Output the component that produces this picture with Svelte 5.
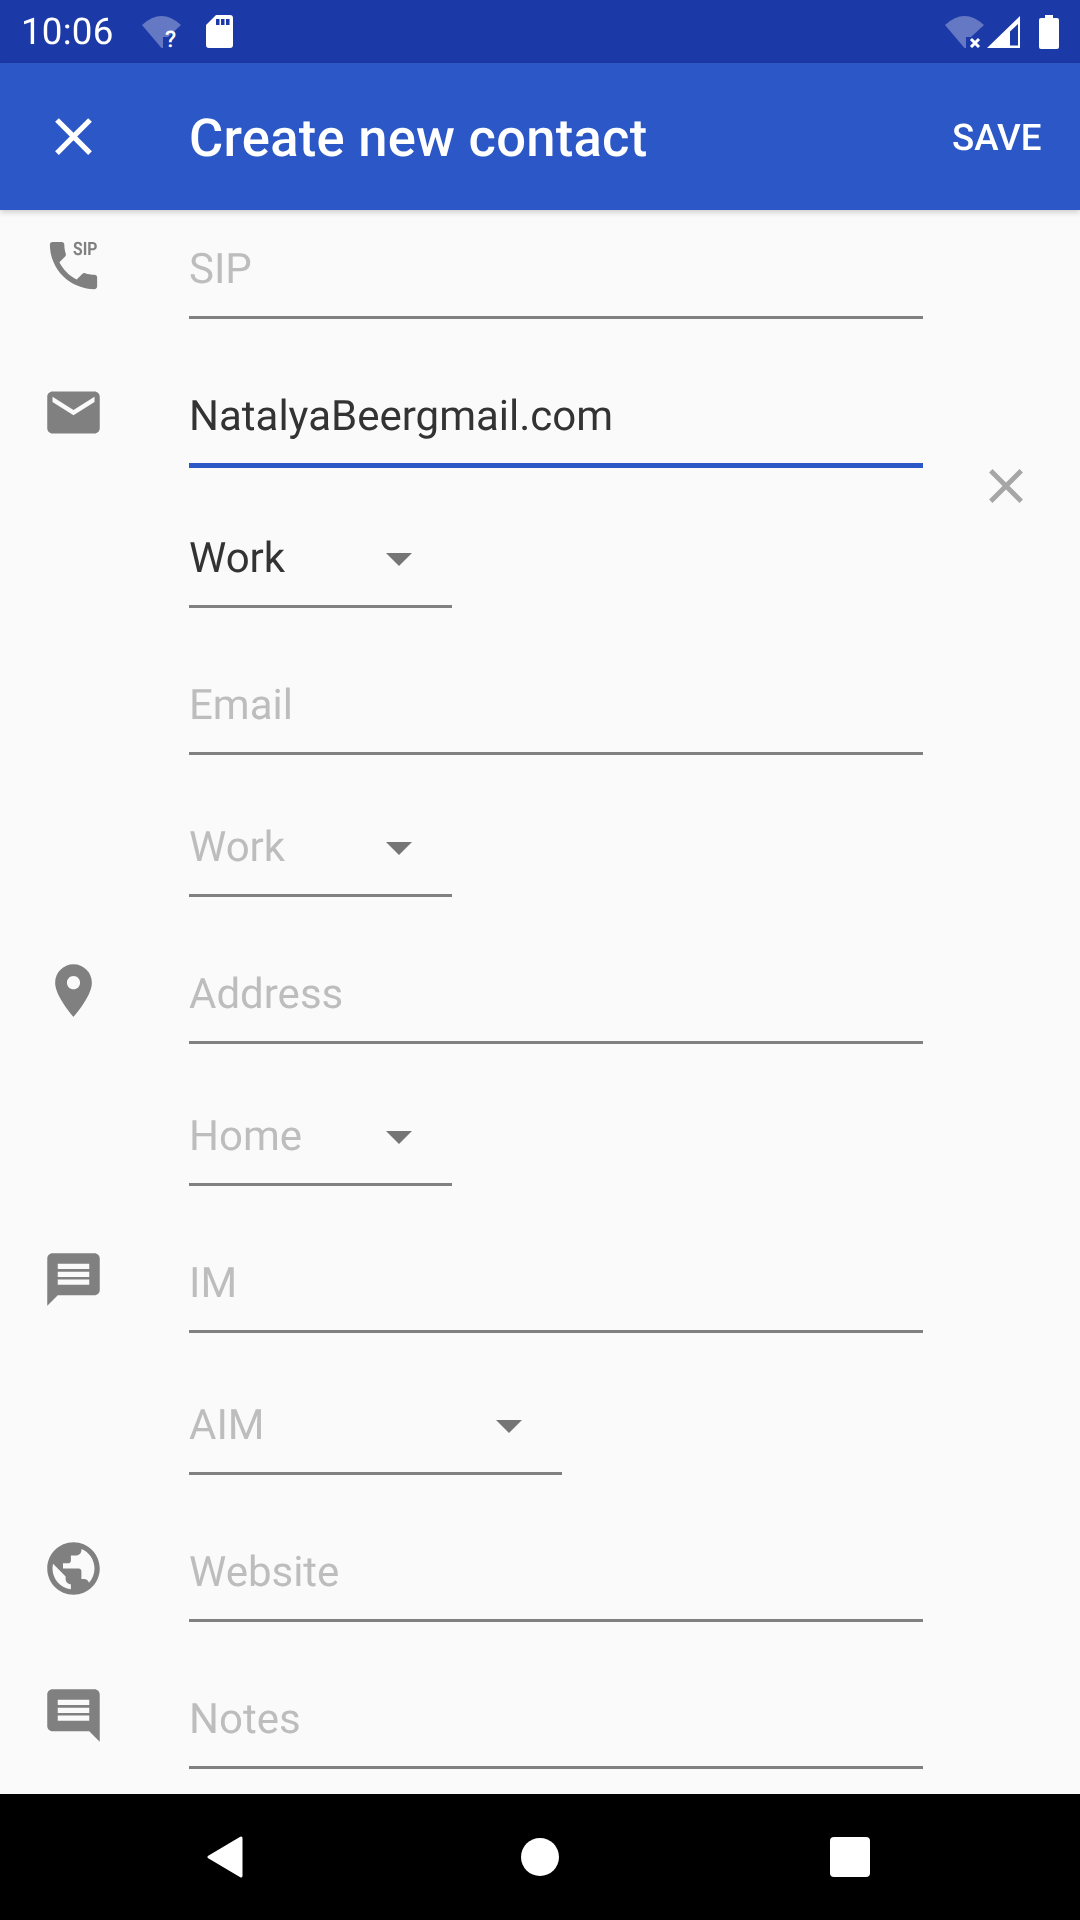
<script>
  const closePath = 'M19 6.41 17.59 5 12 10.59 6.41 5 5 6.41 10.59 12 5 17.59 6.41 19 12 13.41 17.59 19 19 17.59 13.41 12z';

  const groups = [
    { icon: 'M20 15.5c-1.25 0-2.45-.2-3.57-.57-.35-.11-.74-.03-1.01.24l-2.2 2.2c-2.83-1.44-5.15-3.75-6.59-6.59l2.2-2.21c.27-.26.35-.65.24-1C8.7 6.45 8.5 5.25 8.5 4c0-.55-.45-1-1-1H4c-.55 0-1 .45-1 1 0 9.39 7.61 17 17 17 .55 0 1-.45 1-1v-3.5c0-.55-.45-1-1-1z', sip: true, field: 'SIP' },
    { icon: 'M20 4H4c-1.1 0-2 .9-2 2v12c0 1.1.9 2 2 2h16c1.1 0 2-.9 2-2V6c0-1.1-.9-2-2-2zm0 4l-8 5-8-5V6l8 5 8-5v2z', field: 'Email', value: 'NatalyaBeergmail.com', focused: true, type: 'Work', typeValue: true, removable: true },
    { field: 'Email', type: 'Work' },
    { icon: 'M12 2C8.13 2 5 5.13 5 9c0 5.25 7 13 7 13s7-7.75 7-13c0-3.87-3.13-7-7-7zm0 9.5c-1.38 0-2.5-1.12-2.5-2.5s1.12-2.5 2.5-2.5 2.5 1.12 2.5 2.5-1.12 2.5-2.5 2.5z', field: 'Address', type: 'Home' },
    { icon: 'M20 2H4c-1.1 0-1.99.9-1.99 2L2 22l4-4h14c1.1 0 2-.9 2-2V4c0-1.1-.9-2-2-2zm-2 12H6v-2h12v2zm0-3H6V9h12v2zm0-3H6V6h12v2z', field: 'IM', type: 'AIM', wide: true },
    { icon: 'M12 2C6.48 2 2 6.48 2 12s4.48 10 10 10 10-4.48 10-10S17.52 2 12 2zm-1 17.93c-3.95-.49-7-3.85-7-7.93 0-.62.08-1.21.21-1.79L9 15v1c0 1.1.9 2 2 2v1.93zm6.9-2.54c-.26-.81-1-1.39-1.9-1.39h-1v-3c0-.55-.45-1-1-1H8v-2h2c.55 0 1-.45 1-1V7h2c1.1 0 2-.9 2-2v-.41c2.93 1.19 5 4.06 5 7.41 0 2.08-.8 3.97-2.1 5.39z', field: 'Website' },
    { icon: 'M21.99 4c0-1.1-.89-2-1.99-2H4c-1.1 0-2 .9-2 2v12c0 1.1.9 2 2 2h14l4 4-.01-18zM18 14H6v-2h12v2zm0-3H6V9h12v2zm0-3H6V6h12v2z', field: 'Notes' }
  ];
</script>

<div class="page">
  <div class="statusbar">
    <span class="time">10:06</span>
    <svg class="wifi-q" width="39" height="32" viewBox="0 0 39 32">
      <path d="M0 9Q19.500 -9 39 9L26 21H21V32H19.500Z" fill="#fff" opacity="0.32" />
      <text x="23" y="31" class="wifi-mark">?</text>
    </svg>
    <svg class="sd" width="27" height="33" viewBox="0 0 27 33">
      <path fill="#fff" fill-rule="evenodd" d="M10 0H24a3 3 0 0 1 3 3V30a3 3 0 0 1-3 3H3a3 3 0 0 1-3-3V10ZM10 4V10H13.500V4ZM15 4V10H18.500V4ZM20 4V10H23.500V4Z" />
    </svg>
    <span class="spacer"></span>
    <svg width="39" height="32" viewBox="0 0 39 32">
      <path d="M0 9Q19.500 -9 39 9L26 21H21V32H19.500Z" fill="#fff" opacity="0.32" />
      <path d="M26 23 34 31M34 23 26 31" stroke="#fff" stroke-width="3" fill="none" />
    </svg>
    <svg class="signal" width="33" height="32" viewBox="0 0 33 32">
      <path fill="#fff" fill-rule="evenodd" d="M33 0V32H0ZM31 8 23 15.500V29.500H31Z" />
    </svg>
    <svg class="battery" width="20" height="34" viewBox="0 0 20 34">
      <path fill="#fff" d="M6 0H14V3H18a2 2 0 0 1 2 2V32a2 2 0 0 1-2 2H2a2 2 0 0 1-2-2V5a2 2 0 0 1 2-2H6Z" />
    </svg>
  </div>

  <header class="appbar">
    <svg class="close" width="63" height="63" viewBox="0 0 24 24"><path d={closePath} fill="#fff" /></svg>
    <h1>Create new contact</h1>
    <span class="save">SAVE</span>
  </header>

  <main class="content">
    <div class="form">
      {#each groups as g}
        <section class="group">
          <div class="icon-cell">
            {#if g.icon}
              <svg width="63" height="63" viewBox="0 0 24 24">
                <path d={g.icon} fill="#808080" />
                {#if g.sip}
                  <text x="11.800" y="8" textLength="9.300" lengthAdjust="spacingAndGlyphs" class="sip-mark">SIP</text>
                {/if}
              </svg>
            {/if}
          </div>
          <div class="stack">
            <div class="field" class:focused={g.focused}>
              <span class="input" class:filled={g.value}>{g.value ?? g.field}</span>
            </div>
            {#if g.type}
              <div class="spinner-row" class:after-focus={g.focused}>
                <div class="spinner" class:wide={g.wide}>
                  <span class="input" class:filled={g.typeValue}>{g.type}</span>
                  <i class="arrow"></i>
                </div>
              </div>
            {/if}
          </div>
          {#if g.removable}
            <div class="action">
              <svg width="58" height="58" viewBox="0 0 24 24"><path d={closePath} fill="#a6a6a6" /></svg>
            </div>
          {/if}
        </section>
      {/each}
    </div>
  </main>

  <nav class="navbar">
    <svg class="back" width="36" height="42" viewBox="0 0 36 42">
      <path d="M34 2V40L2 21Z" fill="#fff" stroke="#fff" stroke-width="3" stroke-linejoin="round" />
    </svg>
    <span class="home"></span>
    <span class="recents"></span>
  </nav>
</div>

<style>
  :global(body) {
    margin: 0;
    background: #fafafa;
  }

  .page {
    width: 1080px;
    height: 1920px;
    display: flex;
    flex-direction: column;
    font-family: Roboto, "Liberation Sans", sans-serif;
    text-rendering: geometricPrecision;
    overflow: hidden;
  }

  .statusbar {
    height: 63px;
    flex: none;
    display: flex;
    align-items: center;
    background: #1c39a8;
    padding: 0 21px 0 21px;
    box-sizing: border-box;
    color: #fff;
  }

  .time {
    font-size: 36.75px;
    line-height: 63px;
    width: 121px;
    letter-spacing: 0.2px;
    will-change: transform;
  }

  .wifi-q {
    overflow: visible;
  }

  .wifi-mark {
    font: 500 23px Roboto, sans-serif;
    fill: #fff;
  }

  .sd {
    margin-left: 25px;
  }

  .spacer {
    flex: 1;
  }

  .signal {
    margin-left: 3px;
  }

  .battery {
    margin-left: 19px;
  }

  .appbar {
    height: 147px;
    flex: none;
    display: flex;
    align-items: center;
    background: #2b58c6;
    color: #fff;
    padding: 0 38px 0 42px;
    box-sizing: border-box;
    position: relative;
    z-index: 1;
    box-shadow: 0 2px 6px rgba(0, 0, 0, 0.2);
  }

  .appbar h1 {
    margin: 3px 0 0 84px;
    font-size: 52.5px;
    font-weight: 500;
    letter-spacing: 0.25px;
    flex: 1;
    will-change: transform;
  }

  .save {
    font-size: 36.75px;
    font-weight: 500;
    margin-top: 1px;
    will-change: transform;
  }

  .content {
    flex: 1;
    min-height: 0;
    overflow: hidden;
  }

  .form {
    margin-top: -38px;
    will-change: transform;
  }

  .group {
    display: grid;
    grid-template-columns: 189px 734px 1fr;
  }

  .icon-cell {
    padding: 62px 0 0 42px;
  }

  .icon-cell svg {
    display: block;
  }

  .sip-mark {
    font: 700 7px Roboto, sans-serif;
    fill: #808080;
  }

  .field {
    height: 147px;
    box-sizing: border-box;
    display: flex;
    align-items: flex-end;
    border-bottom: 3px solid #808080;
    padding-bottom: 22px;
  }

  .field.focused {
    height: 149px;
    border-bottom: 5px solid #2b58c6;
  }

  .spinner-row {
    height: 142px;
    display: flex;
    align-items: flex-end;
  }

  .spinner-row.after-focus {
    height: 140px;
  }

  .spinner {
    width: 263px;
    box-sizing: border-box;
    display: flex;
    align-items: center;
    justify-content: space-between;
    border-bottom: 3px solid #808080;
    padding: 0 40px 22px 0;
  }

  .spinner.wide {
    width: 373px;
  }

  .input {
    font-size: 42px;
    line-height: 49px;
    color: #bdbdbd;
  }

  .input.filled {
    color: #333;
  }

  .arrow {
    width: 0;
    height: 0;
    margin-bottom: -1px;
    border-left: 13.500px solid transparent;
    border-right: 13.500px solid transparent;
    border-top: 13px solid #757575;
  }

  .action {
    padding: 138px 0 0 54px;
  }

  .action svg {
    display: block;
  }

  .navbar {
    height: 126px;
    flex: none;
    background: #000;
    display: flex;
    align-items: center;
    padding-left: 207px;
  }

  .home {
    width: 38px;
    height: 38px;
    border-radius: 50%;
    background: #fff;
    margin-left: 278px;
  }

  .recents {
    width: 40px;
    height: 40px;
    border-radius: 4px;
    background: #fff;
    margin-left: 271px;
  }
</style>
